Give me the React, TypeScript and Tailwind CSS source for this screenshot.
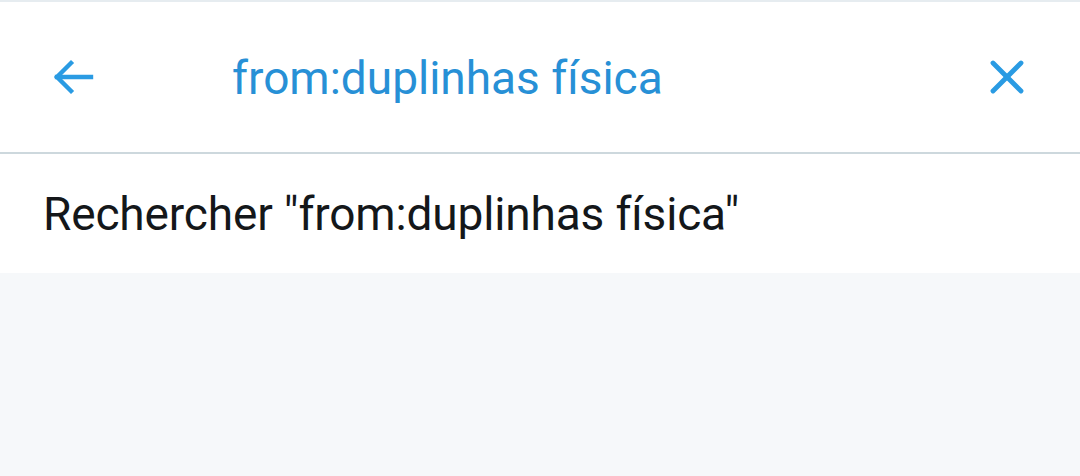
import React from "react";

export default function App() {
  return (
    <div className="w-[1080px] h-[476px] bg-[#f6f8fa] flex flex-col" style={{ fontFamily: "Roboto, 'Noto Sans', sans-serif" }}>
      <div className="h-[2px] bg-[#e6ecf0]" />
      <div className="h-[152px] bg-white flex items-center border-b-[2px] border-[#cdd8dd]">
        <div className="w-[148px] flex items-center justify-center">
          <svg width="48" height="48" viewBox="0 0 24 24" fill="none" stroke="#2a9be3" strokeWidth="2.2" strokeLinecap="square" strokeLinejoin="miter">
            <path d="M20.5 12H3.5" />
            <path d="M10.5 5L3.5 12L10.5 19" />
          </svg>
        </div>
        <div className="flex-1 text-[46px] text-[#2790d6] leading-none ml-[84px] mt-[2px]">from:duplinhas física</div>
        <div className="w-[146px] flex items-center justify-center">
          <svg width="48" height="48" viewBox="0 0 24 24" fill="none" stroke="#2a9be3" strokeWidth="2.4" strokeLinecap="round">
            <path d="M5 5L19 19" />
            <path d="M19 5L5 19" />
          </svg>
        </div>
      </div>
      <div className="h-[119px] bg-white flex items-center px-[43px]">
        <span className="text-[46px] text-[#14171a] leading-none tracking-[-0.15px]">Rechercher "from:duplinhas física"</span>
      </div>
    </div>
  );
}
